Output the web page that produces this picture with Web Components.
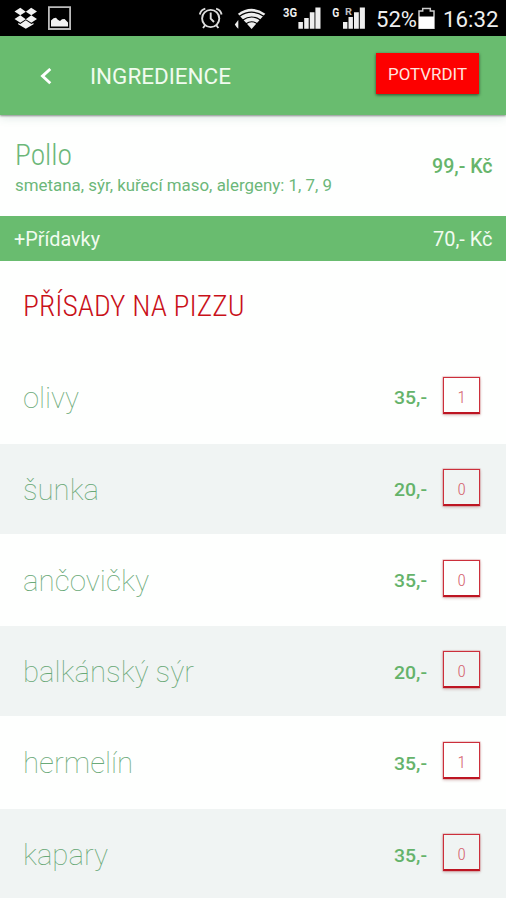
<!DOCTYPE html>
<html lang="cs">
<head>
<meta charset="utf-8">
<title>Ingredience</title>
<style>
html,body{margin:0;background:#fff}
body{font-family:Roboto,"Noto Sans",sans-serif;width:506px;height:900px;overflow:hidden}
</style>
</head>
<body>
<pizza-app></pizza-app>
<script>
function define(name, html, setup){
  const t=document.createElement('template');
  t.innerHTML=html;
  customElements.define(name,class extends HTMLElement{
    connectedCallback(){
      if(this.shadowRoot)return;
      this.attachShadow({mode:'open'}).append(t.content.cloneNode(true));
      if(setup)setup(this,this.shadowRoot);
    }
  });
}

// A line of text condensed or widened to the width given in "w".
define('fit-text',`<style>
:host{display:block;line-height:1;white-space:nowrap;flex:none}
span{display:inline-block;transform-origin:0 0;vertical-align:top}
</style><span><slot></slot></span>`,(el,root)=>{
  const w=+el.getAttribute('w'),s=root.querySelector('span');
  el.style.fontSize=el.getAttribute('size')+'px';
  const n=s.getBoundingClientRect().width;
  el.style.width=w+'px';
  s.style.transform='scaleX('+(w/n)+')';
});

define('status-bar',`<style>
:host{display:flex;height:36px;background:#000;color:#eee;box-sizing:border-box;padding-left:14px}
svg{display:block;flex:none}
.mid{margin-left:126px}
.pct{margin:7.5px 0 0 6.5px}
.bat{margin-left:1px}
.clock{margin:7.5px 0 0 8.5px}
</style>
<svg width="58" height="36" viewBox="14 0 58 36" fill="#f2f2f2">
 <path d="M20.3 7.8 25.8 11.7 20.3 15.3 14.5 11.6zM31.2 7.8 37 11.6 31.3 15.3 25.8 11.7zM20.3 15.3 25.8 19.2 20.3 22.8 14.5 19.1zM31.3 15.3 37 19.1 31.3 22.8 25.8 19.2zM25.8 20.3 31.4 24 33.5 22.9V24.3L25.8 28.8 18.2 24.3V22.9L20.3 24z"/>
 <path d="M48.9 7.2H70.1V29H48.9z" fill="#000" stroke="#bcbcbc" stroke-width="1.8"/>
 <path d="M51 26.6V20.5L53.6 18.2 56 17.8 57.8 19.8 60 21 62 19.2 64.6 19 68 22.5V26.6z"/>
</svg>
<svg class="mid" width="171" height="36" viewBox="198 0 171 36" fill="#eee">
 <g fill="none" stroke="#ddd" stroke-width="1.9"><circle cx="210.7" cy="18.5" r="8.6"/><path d="M210.7 12.5V18.7L214 22M199.8 14.5Q200.8 9.8 205.3 8.6M221.6 14.5Q220.6 9.8 216.1 8.6M205.3 25 203 28M216.1 25 218.4 28"/></g>
 <path d="M234.8 24.5 238.3 20V28.8L236.5 27z"/>
 <path d="M237.9 13.8Q251.6 3.8 265.3 13.8L251.6 29z"/>
 <path d="M239.5 16.2Q251.6 8 263.7 16.2M242.8 20Q251.6 14 260.4 20M246 23.7Q251.6 19.8 257.2 23.7" fill="none" stroke="#000" stroke-width="1.2"/>
 <path d="M298.4 22H302.9V28.7H298.4zM304.2 18H308.7V28.7H304.2zM309.8 12.3H314.5V28.7H309.8zM315.4 7.5H320.5V28.7H315.4z"/>
 <path d="M343 22H347.4V28.7H343zM348.5 17H352.9V28.7H348.5zM354 12.3H358.8V28.7H354zM359.8 7.5H364.9V28.7H359.8z"/>
 <g font-family="Roboto,sans-serif" font-weight="700"><text x="283" y="16.8" font-size="12.5" textLength="14" lengthAdjust="spacingAndGlyphs">3G</text><text x="332.3" y="16.8" font-size="12" textLength="7" lengthAdjust="spacingAndGlyphs">G</text><text x="345" y="14.8" font-size="9.5" textLength="7" lengthAdjust="spacingAndGlyphs" fill="#bbb">R</text></g>
</svg>
<fit-text class="pct" size="22.5" w="41">52%</fit-text>
<svg class="bat" width="17" height="36" viewBox="417 0 17 36"><path d="M418 28.3V11H421.7V8.5H429.3V11H433V28.3z" fill="#000" stroke="#ccc" stroke-width="1.5"/><path d="M418 16.5H433V28.5H418z" fill="#fff"/></svg>
<fit-text class="clock" size="22.5" w="55.5">16:32</fit-text>`);

define('app-header',`<style>
:host{display:flex;height:79px;background:#69bc6f;color:#f1fbef;position:relative;z-index:1;box-shadow:0 1px 2px rgba(0,0,0,.42),0 4px 8px rgba(60,120,110,.13)}
svg{display:block;margin:32px 0 0 40px;flex:none}
.title{margin:29.5px 0 0 38px;font-weight:400}
action-button{margin:17px 0 0 145px}
</style>
<svg width="12" height="17" viewBox="0 0 12 17"><path d="M10.3 1 2.5 8.1 10.3 15.3" fill="none" stroke="#fff" stroke-width="2.9"/></svg>
<fit-text class="title" size="22" w="141">INGREDIENCE</fit-text>
<action-button>POTVRDIT</action-button>`);

define('action-button',`<style>
:host{display:block;box-sizing:border-box;width:103px;height:41px;padding:12.7px 0 0 11.5px;background:#fd0000;color:#ffe3df;box-shadow:0 1px 3px rgba(0,0,0,.6)}
</style><fit-text size="17" w="79"><slot></slot></fit-text>`,(el,root)=>{
  root.querySelector('fit-text').textContent=el.textContent;
});

define('product-summary',`<style>
:host{display:flex;justify-content:space-between;height:101px;padding:0 14px 0 14.5px;color:#6cb779}
.info{display:flex;flex-direction:column;gap:8px;padding-top:25.3px}
.name{font-family:"Roboto Condensed",Roboto,sans-serif;font-weight:300}
.price{margin-top:42px;font-weight:500;color:#66b56b}
</style>
<div class="info"><fit-text class="name" size="30" w="57">Pollo</fit-text>
<fit-text size="16.5" w="317">smetana, sýr, kuřecí maso, alergeny: 1, 7, 9</fit-text></div>
<fit-text class="price" size="19.5" w="60.5">99,- Kč</fit-text>`);

define('extras-bar',`<style>
:host{display:flex;justify-content:space-between;box-sizing:border-box;height:45px;padding:14px 13.5px 0 14px;background:#69bc6f;color:#f1fbef}
</style><fit-text size="19.5" w="86">+Přídavky</fit-text><fit-text size="19.5" w="59.5">70,- Kč</fit-text>`);

define('section-heading',`<style>
:host{display:block;box-sizing:border-box;height:91px;padding:31.3px 0 0 22.5px;color:#c91119;font-family:"Roboto Condensed",Roboto,sans-serif;font-weight:300}
</style><fit-text size="29.5" w="221.5">PŘÍSADY NA PIZZU</fit-text>`);

define('count-box',`<style>
:host{display:flex;justify-content:center;box-sizing:border-box;width:37px;height:37px;padding-top:11px;border:1px solid #cc2f3b;border-bottom:2px solid #bd1522;color:#d4606c;font-family:"Roboto Condensed",Roboto,sans-serif;font-weight:300;box-shadow:0 0 0 .5px rgba(204,47,59,.35),0 1px 3px rgba(110,0,0,.3)}
</style><fit-text size="17" w="8"></fit-text>`,(el,root)=>{
  root.querySelector('fit-text').textContent=el.textContent;
});

// name, name width, price, count, row height, text offset
const rows=[
 ['olivy',56,'35,-','1',92,0],
 ['šunka',76,'20,-','0',90,0],
 ['ančovičky',126,'35,-','0',92,1],
 ['balkánský sýr',171,'20,-','0',90,.5],
 ['hermelín',110,'35,-','1',93,1.5],
 ['kapary',85,'35,-','0',89,.5]
];
customElements.define('ingredient-list',class extends HTMLElement{
  connectedCallback(){
    if(this.shadowRoot)return;
    const root=this.attachShadow({mode:'open'});
    root.innerHTML=`<style>:host{display:flex;flex-direction:column}
.row{display:grid;grid-template-columns:1fr 49px 38px;align-items:start;box-sizing:border-box;padding:0 25px 0 22.5px}
.row:nth-of-type(even){background:#f0f4f3}
.name{margin-top:31.7px;font-weight:100;color:#5aa16a;opacity:.9}
.price{margin-top:36.2px;font-weight:500;color:#62b268;opacity:.98}
count-box{margin-top:24.5px}
</style>`+rows.map(([n,w,p,c,h,o])=>`<div class="row" style="height:${h}px;padding-top:${o}px">
<fit-text class="name" size="29.5" w="${w}">${n}</fit-text><fit-text class="price" size="19" w="33">${p}</fit-text><count-box>${c}</count-box></div>`).join('');
  }
});

define('pizza-app',`<style>:host{display:flex;flex-direction:column;width:506px;height:900px;background:#fefffe;overflow:hidden}
:host>*{flex:none}</style>
<status-bar></status-bar><app-header></app-header><product-summary></product-summary>
<extras-bar></extras-bar><section-heading></section-heading><ingredient-list></ingredient-list>`);
</script>
</body>
</html>
